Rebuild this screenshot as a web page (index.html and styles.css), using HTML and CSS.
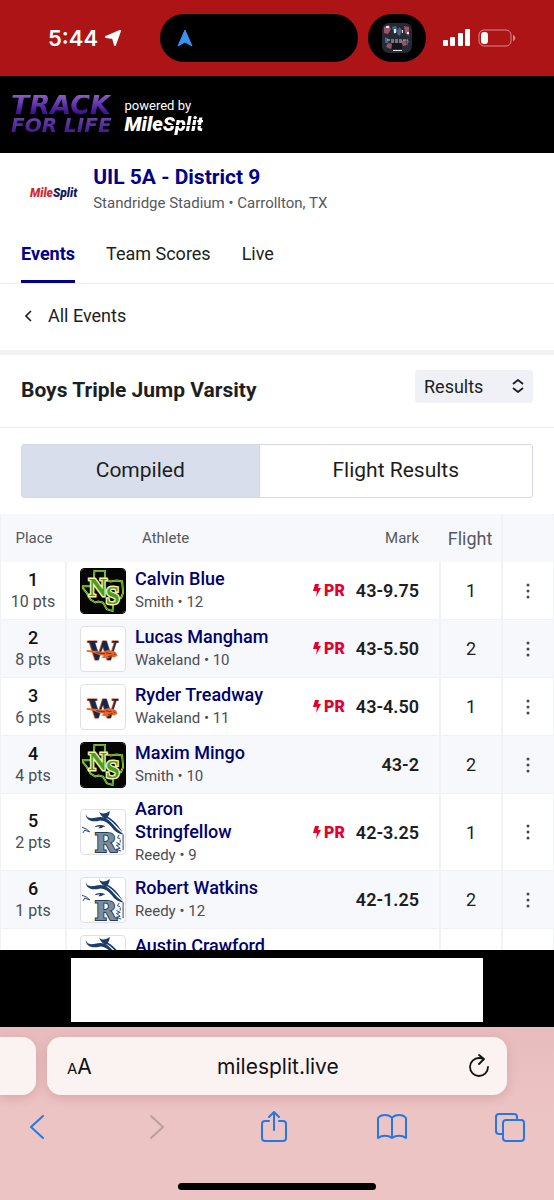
FILE: index.html
```html
<!DOCTYPE html>
<html lang="en">
<head>
    <meta charset="UTF-8">
    <meta name="viewport" content="width=device-width, initial-scale=1">
    <title>Boys Triple Jump Varsity</title>
    <link rel="stylesheet" href="styles.css">
</head>
<body>
<!-- shared drawings -->
<svg class="defs" width="0" height="0">
    <symbol id="ns" viewBox="0 0 46 46">
        <rect width="46" height="46" fill="#050505"/>
        <path d="M14 2h11v9l6 2 6-1 6 1 1 12-2 5-8 4-1 10-6-2-4-7-5-1-3 1-5-3-4-7-4-5v-2h11z" fill="#000" stroke="#d5e021" stroke-width="2"/>
        <path d="M14 2h11v9l6 2 6-1 6 1 1 12-2 5-8 4-1 10-6-2-4-7-5-1-3 1-5-3-4-7-4-5v-2h11z" fill="none" stroke="#2f9a2c" stroke-width="1"/>
        <g class="letters">
            <text x="8" y="28">N</text>
            <text x="26" y="37">S</text>
        </g>
    </symbol>
    <symbol id="wake" viewBox="0 0 46 46">
        <text x="7" y="34" class="letter-w">W</text>
        <path d="M6 24l11 1 6 1 5-2 6 1 3 2 1 3-3 2-4-1-3 2-7-1 3-2-6-1-5-2-7-1z" fill="#e8662c"/>
        <path d="M16 27l9 1M26 27l6 1M28 31l5-1M34 28l2 1" fill="none" stroke="#7a2a18" stroke-width="1"/>
    </symbol>
    <symbol id="reedy" viewBox="0 0 46 46">
        <path d="M5 4c1 5 5 5 10 4s9-1 13 2 7 7 10 10l7 6c-5-1-9-3-12-7-4-5-8-8-13-8-7 2-15 1-15-7z" fill="#1b3d68"/>
        <path d="M19 0c0 4 4 4 8 3l3-2c0 3-1 5-2 6 6 3 11 9 16 17-6-6-10-11-16-15-5 0-9-4-9-9z" fill="#1b3d68"/>
        <path d="M14 18c3-3 6-3 12-1-3 0-4 3-8 2l2-2z" fill="#1b3d68"/>
        <path d="M1 18l5 2 3 3-5-2-2 3M34 20l5 3M40 26l-2 3 3 1M44 26v16M37 34l4 2-4 1 4 3-4 1 5 2M41 31v3" fill="none" stroke="#1b3d68" stroke-width="1"/>
        <text x="14" y="44" class="letter-r">R</text>
    </symbol>
    <symbol id="bolt" viewBox="0 0 8 13">
        <path d="M2 0h4L5 4h3L3 13l1-6H0z" fill="#e4002b"/>
    </symbol>
    <symbol id="dots" viewBox="0 0 6 18">
        <circle cx="3" cy="3" r="1.5"/>
        <circle cx="3" cy="9" r="1.5"/>
        <circle cx="3" cy="15" r="1.5"/>
    </symbol>
</svg>

<div class="status">
    <div class="time">
        <span>5:44</span>
        <svg width="18" height="18" viewBox="0 0 18 18"><path d="M16 2L11 16 9 9 2 8z" fill="#fff" stroke="#fff" stroke-width="2" stroke-linejoin="round"/></svg>
    </div>
    <div class="island">
        <svg width="16" height="18" viewBox="0 0 16 18"><path d="M8 1l7 16-7-4-7 4z" fill="#3494f5" stroke="#3494f5" stroke-width="1" stroke-linejoin="round"/></svg>
    </div>
    <div class="bubble">
        <svg width="30" height="30" viewBox="0 0 30 30">
            <rect width="30" height="30" rx="7" fill="#252a35"/>
            <path d="M2 4l5-2 2 4-3 5-4-1zM22 3l5 1v9l-4-3zM6 20l4 1-1 5-5-2zM19 18l4-1 2 5-4 1z" fill="#9c5268"/>
            <path d="M10 4l4-1 2 5-4 3zM17 4l3 3-2 6-3-2zM3 14l4 2-1 4H3zM24 16l3 2-2 5z" fill="#49677f"/>
            <path d="M4 3h3v2H4zM12 6h2v4h-2zM20 7h1v3h-1zM25 9h2v2h-2zM11 27h9v1h-9z" fill="#e5e7ec"/>
            <path d="M5 17h21M9 19h12" stroke="#b8bdc4" stroke-width="1" stroke-dasharray="3 1"/>
            <path d="M10 20h10v6H10z" fill="#11151a"/>
        </svg>
    </div>
    <div class="power">
        <svg width="27" height="18" viewBox="0 0 27 18" fill="#fff">
            <rect x="0" y="11" width="5" height="6" rx="1"/>
            <rect x="7" y="8" width="5" height="9" rx="1"/>
            <rect x="15" y="4" width="5" height="13" rx="1"/>
            <rect x="22" y="0" width="5" height="17" rx="1"/>
        </svg>
        <svg width="38" height="18" viewBox="0 0 38 18">
            <rect x="1" y="1" width="32" height="16" rx="5" fill="none" stroke="#d98b8b" stroke-width="1"/>
            <rect x="3" y="3" width="7" height="12" rx="3" fill="#fff"/>
            <path d="M35 6c3 1 3 5 0 6z" fill="#d98b8b"/>
        </svg>
    </div>
</div>

<header class="top">
    <a href="#" class="track"><span class="track-big">TRACK</span><span class="track-small">FOR LIFE</span></a>
    <a href="#" class="powered"><span>powered by</span><b>Mile<span class="cut">Split</span></b></a>
</header>

<main>
    <div class="meet">
        <div class="meet-logo"><span>Mile</span>Split</div>
        <div>
            <h1>UIL 5A - District 9</h1>
            <p>Standridge Stadium • Carrollton, TX</p>
        </div>
    </div>
    <nav class="tabs">
        <a href="#" class="active">Events</a>
        <a href="#">Team Scores</a>
        <a href="#">Live</a>
    </nav>
    <a href="#" class="back">
        <svg width="8" height="12" viewBox="0 0 8 12"><path d="M6 1L1 6l5 5" fill="none" stroke="#1c1e21" stroke-width="1.6"/></svg>
        All Events
    </a>
    <div class="event">
        <h2>Boys Triple Jump Varsity</h2>
        <div class="view">
            <select aria-label="View">
                <option>Results</option>
            </select>
            <svg width="12" height="14" viewBox="0 0 12 14"><path d="M1 5l5-4 5 4M1 9l5 4 5-4" fill="none" stroke="#1c1e21" stroke-width="1.8"/></svg>
        </div>
    </div>
    <div class="switch">
        <button type="button" class="on">Compiled</button>
        <button type="button">Flight Results</button>
    </div>

    <table class="results">
        <thead>
        <tr>
            <th class="place">Place</th>
            <th class="athlete">Athlete</th>
            <th class="mark">Mark</th>
            <th class="flight">Flight</th>
            <th class="more"></th>
        </tr>
        </thead>
        <tbody>
        <tr>
            <td class="place"><b>1</b>10 pts</td>
            <td class="athlete">
                <div class="who">
                    <svg class="team dark"><use href="#ns"/></svg>
                    <div><a href="#">Calvin Blue</a><p>Smith • 12</p></div>
                </div>
            </td>
            <td class="mark"><span class="pr"><svg><use href="#bolt"/></svg>PR</span>43-9.75</td>
            <td class="flight">1</td>
            <td class="more"><button type="button" aria-label="More"><svg><use href="#dots"/></svg></button></td>
        </tr>
        <tr>
            <td class="place"><b>2</b>8 pts</td>
            <td class="athlete">
                <div class="who">
                    <svg class="team"><use href="#wake"/></svg>
                    <div><a href="#">Lucas Mangham</a><p>Wakeland • 10</p></div>
                </div>
            </td>
            <td class="mark"><span class="pr"><svg><use href="#bolt"/></svg>PR</span>43-5.50</td>
            <td class="flight">2</td>
            <td class="more"><button type="button" aria-label="More"><svg><use href="#dots"/></svg></button></td>
        </tr>
        <tr>
            <td class="place"><b>3</b>6 pts</td>
            <td class="athlete">
                <div class="who">
                    <svg class="team"><use href="#wake"/></svg>
                    <div><a href="#">Ryder Treadway</a><p>Wakeland • 11</p></div>
                </div>
            </td>
            <td class="mark"><span class="pr"><svg><use href="#bolt"/></svg>PR</span>43-4.50</td>
            <td class="flight">1</td>
            <td class="more"><button type="button" aria-label="More"><svg><use href="#dots"/></svg></button></td>
        </tr>
        <tr>
            <td class="place"><b>4</b>4 pts</td>
            <td class="athlete">
                <div class="who">
                    <svg class="team dark"><use href="#ns"/></svg>
                    <div><a href="#">Maxim Mingo</a><p>Smith • 10</p></div>
                </div>
            </td>
            <td class="mark">43-2</td>
            <td class="flight">2</td>
            <td class="more"><button type="button" aria-label="More"><svg><use href="#dots"/></svg></button></td>
        </tr>
        <tr>
            <td class="place"><b>5</b>2 pts</td>
            <td class="athlete">
                <div class="who">
                    <svg class="team"><use href="#reedy"/></svg>
                    <div><a href="#">Aaron Stringfellow</a><p>Reedy • 9</p></div>
                </div>
            </td>
            <td class="mark"><span class="pr"><svg><use href="#bolt"/></svg>PR</span>42-3.25</td>
            <td class="flight">1</td>
            <td class="more"><button type="button" aria-label="More"><svg><use href="#dots"/></svg></button></td>
        </tr>
        <tr>
            <td class="place"><b>6</b>1 pts</td>
            <td class="athlete">
                <div class="who">
                    <svg class="team"><use href="#reedy"/></svg>
                    <div><a href="#">Robert Watkins</a><p>Reedy • 12</p></div>
                </div>
            </td>
            <td class="mark">42-1.25</td>
            <td class="flight">2</td>
            <td class="more"><button type="button" aria-label="More"><svg><use href="#dots"/></svg></button></td>
        </tr>
        <tr>
            <td class="place"><b>7</b></td>
            <td class="athlete">
                <div class="who">
                    <svg class="team"><use href="#reedy"/></svg>
                    <div><a href="#">Austin Crawford</a><p>&nbsp;</p></div>
                </div>
            </td>
            <td class="mark">42-0.75</td>
            <td class="flight">2</td>
            <td class="more"><button type="button" aria-label="More"><svg><use href="#dots"/></svg></button></td>
        </tr>
        </tbody>
    </table>
</main>

<div class="ad"><div></div></div>

<footer class="browser">
    <div class="address">
        <div class="prev-tab"></div>
        <div class="url">
            <button type="button" class="aa" aria-label="Page settings"><small>A</small>A</button>
            <input type="text" value="milesplit.live" aria-label="Address">
            <button type="button" aria-label="Reload">
                <svg width="22" height="24" viewBox="0 0 22 24" fill="none" stroke="#111" stroke-width="1.8" stroke-linecap="round" stroke-linejoin="round"><path d="M20 13a9 9 0 1 1-9-9q3 0 5 1M11 1l5 4-5 5"/></svg>
            </button>
        </div>
    </div>
    <div class="toolbar">
        <button type="button" aria-label="Back"><svg viewBox="0 0 30 34"><path d="M20 6L8 17l12 11"/></svg></button>
        <button type="button" aria-label="Forward" class="off"><svg viewBox="0 0 30 34"><path d="M10 6l12 11-12 11"/></svg></button>
        <button type="button" aria-label="Share"><svg viewBox="0 0 30 34"><path d="M10 11H6a3 3 0 0 0-3 3v14a3 3 0 0 0 3 3h18a3 3 0 0 0 3-3V14a3 3 0 0 0-3-3h-4M15 20V2M10 7l5-5 5 5"/></svg></button>
        <button type="button" aria-label="Bookmarks"><svg viewBox="0 0 30 34"><path d="M15 8C12 4 4 4 1 8v20c4-3 10-3 14 0 4-3 10-3 14 0V8c-3-4-11-4-14 0zv20"/></svg></button>
        <button type="button" aria-label="Tabs"><svg viewBox="0 0 30 34"><path d="M8 24H4a3 3 0 0 1-3-3V7a3 3 0 0 1 3-3h15a3 3 0 0 1 3 3v3"/><rect x="8" y="10" width="21" height="21" rx="3"/></svg></button>
    </div>
    <div class="home"></div>
</footer>
</body>
</html>
```

FILE: styles.css
```css
* {
    margin: 0;
    padding: 0;
    box-sizing: border-box;
}

body {
    display: flex;
    flex-direction: column;
    height: 100vh;
    overflow: hidden;
    font-family: Roboto, "Liberation Sans", sans-serif;
    font-size: 18px;
    color: #1c1e21;
    background: #fff;
}

a {
    color: inherit;
    text-decoration: none;
}

button, select, input {
    font: inherit;
    color: inherit;
    background: none;
    border: 0;
}

svg {
    display: block;
    flex: none;
}

.defs {
    position: absolute;
}

.letters, .letter-w, .letter-r {
    font-family: "DejaVu Serif", serif;
    font-weight: 700;
    paint-order: stroke;
}

.letters {
    font-family: "Liberation Serif", serif;
    font-size: 26px;
    fill: #4c9a2a;
    stroke: #f3f2a0;
    stroke-width: 3px;
}

.letter-w {
    font-size: 28px;
    fill: #14284b;
    stroke: #c9502b;
    stroke-width: 1px;
}

.letter-r {
    font-size: 28px;
    fill: #818b95;
    stroke: #263c59;
    stroke-width: 2px;
}

/* status bar */
.status {
    display: flex;
    align-items: center;
    gap: 10px;
    height: 76px;
    padding: 0 38px 0 48px;
    background: #ac1416;
    flex: none;
}

.time {
    display: flex;
    align-items: center;
    gap: 6px;
    flex: 1;
    color: #fff;
    font-family: Inter, sans-serif;
    font-size: 22px;
    font-weight: 600;
}

.island {
    width: 198px;
    padding: 15px 17px;
    border-radius: 24px;
    background: #000;
}

.bubble {
    padding: 9px 14px;
    border-radius: 24px;
    background: #000;
}

.power {
    display: flex;
    gap: 8px;
    margin-left: 7px;
}

/* site header */
.top {
    display: flex;
    align-items: center;
    gap: 13px;
    height: 77px;
    padding: 0 11px;
    background: #000;
    flex: none;
}

.track {
    display: flex;
    flex-direction: column;
    font-family: "DejaVu Sans", sans-serif;
    font-style: italic;
    font-weight: 700;
    background: linear-gradient(#8a5cc4, #3d1196 45%, #6a45a8 55%, #3d1196);
    background-clip: text;
    -webkit-background-clip: text;
    color: transparent;
}

.track-big {
    font-size: 27px;
    line-height: 20px;
}

.track-small {
    font-size: 20px;
    line-height: 20px;
}

.powered {
    display: flex;
    flex-direction: column;
    color: #fff;
    font-size: 13px;
    line-height: 18px;
}

.powered b {
    font-size: 20px;
    font-weight: 900;
    font-style: italic;
}

.cut {
    background: linear-gradient(#fff 54%, #000 54%, #000 58%, #fff 58%);
    background-clip: text;
    -webkit-background-clip: text;
    color: transparent;
}

main {
    flex: 1;
    min-height: 0;
    overflow: hidden;
}

.meet {
    display: flex;
    align-items: center;
    gap: 16px;
    padding: 10px 21px 8px 30px;
}

.meet-logo {
    padding-top: 8px;
    color: #14175e;
    font-size: 12px;
    font-weight: 900;
    font-style: italic;
}

.meet-logo span {
    color: #d32a2f;
}

h1 {
    color: #00008b;
    font-size: 21px;
    line-height: 28px;
}

.meet p {
    color: #55585d;
    font-size: 15px;
    line-height: 24px;
}

.tabs {
    display: flex;
    gap: 31px;
    padding: 0 21px;
    border-bottom: 1px solid #eee;
}

.tabs a {
    padding: 19px 0 14px;
    line-height: 24px;
    border-bottom: 3px solid transparent;
}

.tabs .active {
    color: #00008b;
    font-weight: 700;
    border-color: #00008b;
}

.back {
    display: flex;
    align-items: center;
    gap: 15px;
    height: 71px;
    padding: 0 25px 3px;
    border-bottom: 5px solid #f2f2f2;
}

.event {
    display: flex;
    align-items: flex-start;
    justify-content: space-between;
    padding: 15px 21px 17px;
    border-bottom: 1px solid #eee;
}

h2 {
    font-size: 21px;
    line-height: 40px;
}

.view {
    position: relative;
    width: 118px;
}

.view select {
    display: block;
    width: 100%;
    height: 33px;
    padding: 0 9px;
    border-radius: 3px;
    background: #f0f1f7;
    appearance: none;
    -webkit-appearance: none;
}

.view svg {
    position: absolute;
    right: 9px;
    top: 9px;
    pointer-events: none;
}

.switch {
    display: flex;
    margin: 16px 21px;
    border: 1px solid #d5d7e2;
    border-radius: 3px;
}

.switch button {
    flex: 53;
    height: 52px;
    padding-bottom: 2px;
    font-size: 21px;
}

.switch .on {
    flex: 46;
    background: #d9deed;
    border-right: 1px solid #d5d7e2;
}

/* results table */
.results {
    width: 100%;
    table-layout: fixed;
    border-spacing: 0;
    border-left: 1px solid #f1f2f6;
    border-right: 1px solid #f1f2f6;
}

.results th {
    height: 48px;
    background: #f7f8fc;
    color: #55585d;
    font-size: 15px;
    font-weight: 400;
}

.results td {
    height: 58px;
    padding-top: 3px;
    padding-bottom: 3px;
    border-bottom: 1px solid #f1f2f6;
    vertical-align: middle;
}

.results tbody tr:nth-child(even) {
    background: #f7f8fc;
}

.results .place {
    width: 66px;
    text-align: center;
}

td.place {
    border-right: 2px solid #f1f2f6;
    color: #4b4e53;
    font-size: 16px;
    line-height: 22px;
}

.place b {
    display: block;
    color: #111;
    font-size: 18px;
    font-weight: 500;
}

.results .athlete {
    padding-left: 13px;
    text-align: left;
}

.results th.athlete {
    padding-left: 75px;
}

.results .mark {
    width: 166px;
    padding-right: 20px;
    text-align: right;
}

td.mark {
    font-weight: 600;
}

.results .flight {
    width: 62px;
    text-align: center;
}

.results th.flight {
    font-size: 18px;
}

td.flight {
    border-left: 2px solid #f1f2f6;
}

.results .more {
    width: 52px;
    border-left: 2px solid #f1f2f6;
}

.who {
    display: flex;
    align-items: center;
    gap: 9px;
}

.team {
    width: 46px;
    height: 46px;
    border: 1px solid #dfe0e5;
    border-radius: 4px;
    background: #fff;
}

.team.dark {
    border-color: #000;
}

.who a {
    display: block;
    color: #00006e;
    font-weight: 500;
    line-height: 23px;
}

.who p {
    color: #4b4e53;
    font-size: 15px;
    line-height: 24px;
}

.pr {
    display: inline-flex;
    align-items: center;
    gap: 3px;
    margin-right: 11px;
    color: #e4002b;
    font-size: 16px;
    font-weight: 900;
}

.pr svg {
    width: 8px;
    height: 13px;
}

.more button {
    display: block;
    margin: 0 auto;
}

.more svg {
    width: 6px;
    height: 18px;
    fill: #45484d;
}

.ad {
    padding: 8px 71px 5px;
    background: #000;
    flex: none;
}

.ad div {
    height: 64px;
    background: #fff;
}

/* browser chrome */
.browser {
    flex: none;
    padding: 10px 0;
    background: linear-gradient(#e8bcbd, #edc4c4 50%);
}

.address {
    display: flex;
    gap: 11px;
    padding-right: 47px;
}

.prev-tab {
    width: 36px;
    border-radius: 0 14px 14px 0;
    background: #fbf2f2;
    box-shadow: 0 3px 12px rgba(120, 50, 50, .18);
}

.url {
    display: flex;
    align-items: center;
    flex: 1;
    height: 58px;
    padding: 0 17px 0 20px;
    border-radius: 14px;
    background: #fbf2f2;
    box-shadow: 0 3px 12px rgba(120, 50, 50, .18);
    color: #111;
    font-family: Inter, sans-serif;
    font-size: 21px;
}

.url input {
    flex: 1;
    min-width: 0;
    padding-right: 4px;
    text-align: center;
}

.aa small {
    font-size: 15px;
}

.toolbar {
    display: flex;
    justify-content: space-between;
    padding: 15px 29px 0 23px;
}

.toolbar svg {
    width: 30px;
    height: 34px;
    fill: none;
    stroke: #2478e5;
    stroke-width: 2;
    stroke-linecap: round;
    stroke-linejoin: round;
}

.toolbar .off svg {
    stroke: #bd9c9d;
}

.home {
    width: 198px;
    height: 7px;
    margin: 39px auto 0;
    border-radius: 4px;
    background: #000;
}
```
